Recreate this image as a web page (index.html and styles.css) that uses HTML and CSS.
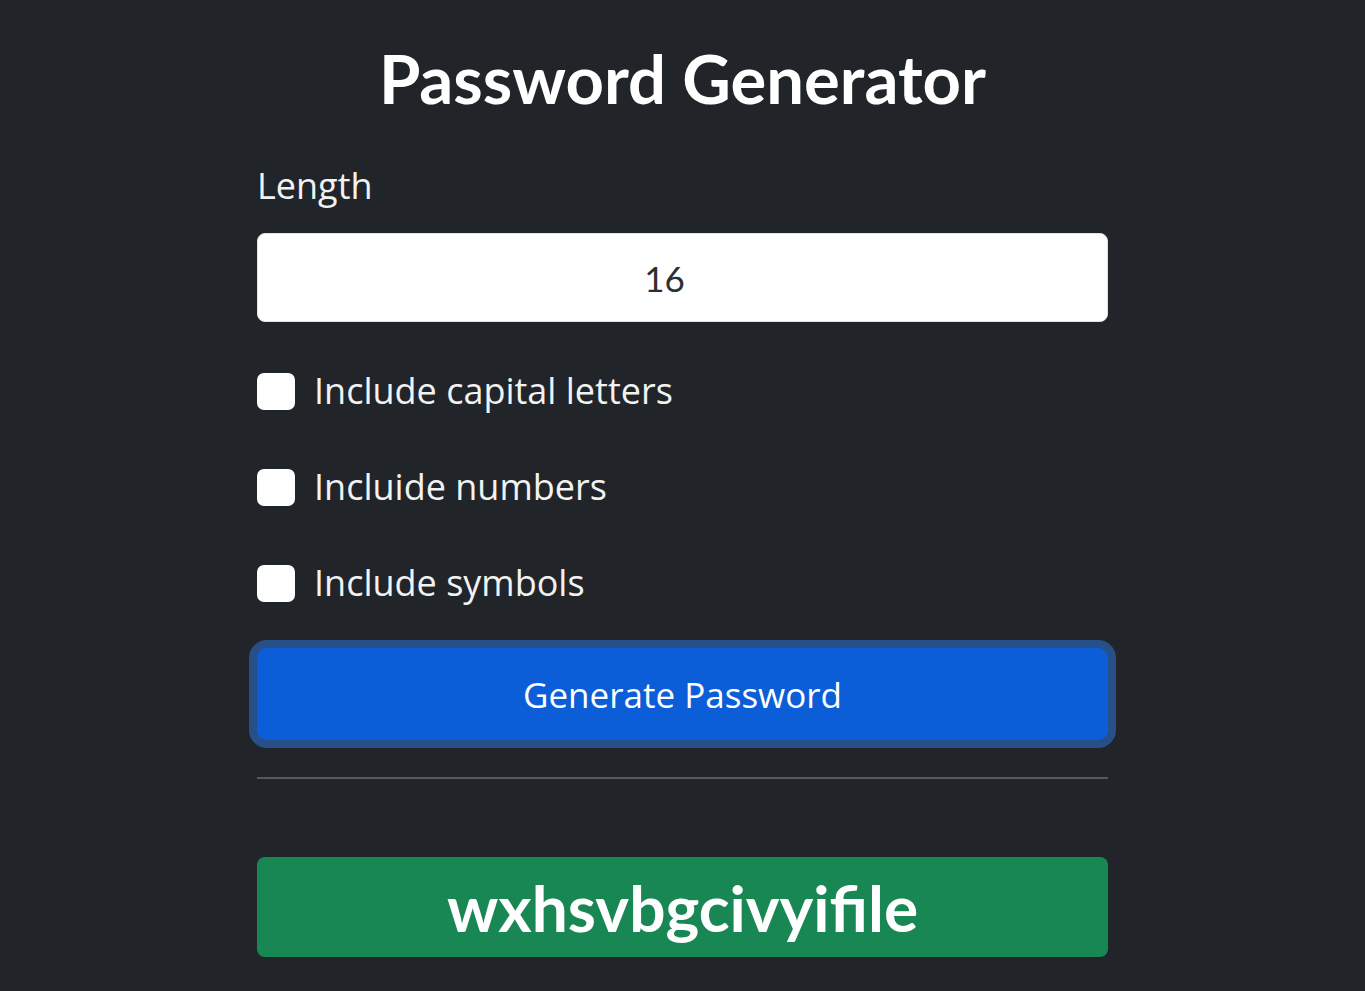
FILE: index.html
```html
<!DOCTYPE html>
<html lang="en">
<head>
<meta charset="utf-8">
<title>Password Generator</title>
<link rel="stylesheet" href="styles.css">
</head>
<body>
<main class="container">
  <h1 class="title">Password Generator</h1>
  <label class="field-label" for="length">Length</label>
  <input class="length-input" id="length" type="number" value="16">
  <div class="options">
    <label class="check"><span class="box"></span><span>Include capital letters</span></label>
    <label class="check"><span class="box"></span><span>Incluide numbers</span></label>
    <label class="check"><span class="box"></span><span>Include symbols</span></label>
  </div>
  <button class="generate" type="button">Generate Password</button>
  <hr class="divider">
  <div class="result">wxhsvbgcivyifile</div>
</main>
</body>
</html>
```
FILE: styles.css
```css
html, body {
  margin: 0;
  padding: 0;
  background: #212529;
  color: #f8f9fa;
  font-family: "Open Sans", Lato, sans-serif;
}

.container {
  width: 851px;
  margin: 0 auto;
  padding-top: 38px;
  display: flex;
  flex-direction: column;
}

.title {
  margin: 0;
  text-align: center;
  font-family: Lato, "Open Sans", sans-serif;
  font-size: 67px;
  font-weight: 700;
  line-height: 80px;
  color: #ffffff;
}

.field-label {
  margin-top: 48px;
  font-size: 36px;
  line-height: 40px;
  color: #f1f2f3;
}

.length-input {
  margin-top: 27px;
  height: 89px;
  box-sizing: border-box;
  border: 1px solid #dee2e6;
  border-radius: 8px;
  background: #ffffff;
  color: #2b2f33;
  font-family: Lato, "Open Sans", sans-serif;
  font-size: 35px;
  text-align: center;
  padding: 0 36px 0 0;
  -moz-appearance: textfield;
}
.length-input::-webkit-outer-spin-button,
.length-input::-webkit-inner-spin-button {
  -webkit-appearance: none;
  margin: 0;
}

.options {
  margin-top: 50px;
  display: flex;
  flex-direction: column;
  gap: 58px;
}

.check {
  display: flex;
  align-items: center;
  gap: 19px;
  font-size: 36px;
  line-height: 38px;
  color: #f1f2f3;
}

.box {
  width: 38px;
  height: 37px;
  border-radius: 7px;
  background: #ffffff;
  flex: none;
}

.generate {
  margin-top: 46px;
  height: 92px;
  border: none;
  border-radius: 10px;
  background: #0b5ed7;
  color: #ffffff;
  font-family: "Open Sans", Lato, sans-serif;
  font-size: 35px;
  box-shadow: 0 0 0 8px rgba(49, 132, 253, 0.45);
}

.divider {
  margin: 37px 0 0;
  border: none;
  border-top: 2px solid #55585c;
}

.result {
  margin-top: 78px;
  height: 100px;
  border-radius: 8px;
  background: #198754;
  color: #ffffff;
  display: flex;
  align-items: center;
  justify-content: center;
  font-family: Lato, "Open Sans", sans-serif;
  font-size: 64px;
  font-weight: 700;
}
```
